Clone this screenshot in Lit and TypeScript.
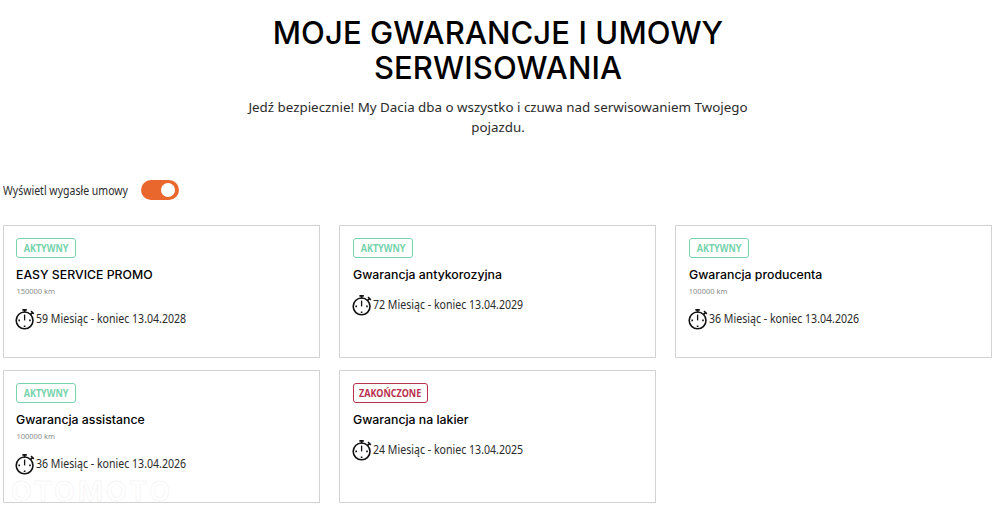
import { LitElement, html, css, nothing } from 'lit'
import { customElement, property, state } from 'lit/decorators.js'
import { classMap } from 'lit/directives/class-map.js'

interface Contract {
  name: string
  active: boolean
  mileage?: string
  months: number
  end: string
}

const CONTRACTS: Contract[] = [
  { name: 'EASY SERVICE PROMO', active: true, mileage: '150000 km', months: 59, end: '13.04.2028' },
  { name: 'Gwarancja antykorozyjna', active: true, months: 72, end: '13.04.2029' },
  { name: 'Gwarancja producenta', active: true, mileage: '100000 km', months: 36, end: '13.04.2026' },
  { name: 'Gwarancja assistance', active: true, mileage: '100000 km', months: 36, end: '13.04.2026' },
  { name: 'Gwarancja na lakier', active: false, months: 24, end: '13.04.2025' }
]

@customElement('contract-card')
export class ContractCard extends LitElement {
  @property({ attribute: false })
  contract!: Contract

  static styles = css`
    :host {
      display: block;
      box-sizing: border-box;
      height: 133px;
      padding: 12px 12px 12px 12.4px;
      border: 1px solid #d2d2d2;
      font-family: 'Noto Sans', sans-serif;
      color: #2b2b2b;
    }

    .badge {
      display: flex;
      justify-content: center;
      box-sizing: border-box;
      width: 60px;
      height: 20px;
      border: 1px solid #77d3ad;
      border-radius: 3px;
      color: #77d3ad;
      font-size: 10.5px;
      font-weight: 700;
      line-height: 18px;
      white-space: nowrap;
    }

    .badge span {
      transform: scaleX(0.86);
    }

    .badge.expired {
      width: 75px;
      border-color: #b9314f;
      color: #b9314f;
    }

    .name {
      margin: 8px 0 0;
      font-family: Inter, sans-serif;
      font-size: 11.6px;
      font-weight: 500;
      line-height: 18px;
      color: #000;
      white-space: nowrap;
      transform: scaleX(1.06);
      transform-origin: left;
    }

    .mileage {
      height: 14px;
      font-size: 7.5px;
      line-height: 14px;
      color: #8c8c8c;
    }

    .term {
      display: flex;
      align-items: center;
      height: 22px;
      margin-top: 11px;
      margin-left: -1px;
      font-size: 12px;
      line-height: 20px;
      white-space: nowrap;
    }

    .term span {
      margin: -3px 0 0 1px;
      transform: scaleX(0.882);
      transform-origin: left;
    }

    .watch {
      flex: none;
      width: 20px;
      height: 22px;
    }
  `

  private renderWatch() {
    return html`
      <svg class="watch" viewBox="0 0 20 22" fill="none" stroke="#111" stroke-width="1.6">
        <circle cx="9.6" cy="11.4" r="8.4" />
        <path d="M7.4 0.9h4.4M9.6 0.9v2.5M15.6 5.4l2-2M16 2.2l2.8 2.6" />
        <path d="M9.6 5.6v5.8" stroke-width="1.3" />
        <path d="M3.4 11.4h1.6M14.2 11.4h1.6M9.6 16.4v1.6" />
      </svg>
    `
  }

  render() {
    const { name, active, mileage, months, end } = this.contract
    return html`
      <div class=${classMap({ badge: true, expired: !active })}>
        <span>${active ? 'AKTYWNY' : 'ZAKOŃCZONE'}</span>
      </div>
      <h2 class="name">${name}</h2>
      ${mileage ? html`<div class="mileage">${mileage}</div>` : nothing}
      <div class="term">${this.renderWatch()}<span>${months} Miesiąc - koniec ${end}</span></div>
    `
  }
}

@customElement('app-root')
export class AppRoot extends LitElement {
  @state()
  private showExpired = true

  static styles = css`
    :host {
      display: block;
      position: relative;
      box-sizing: border-box;
      height: 512px;
      padding: 15px 7px 0 3px;
      overflow: hidden;
      background: #fff;
      font-family: 'Noto Sans', sans-serif;
      color: #2b2b2b;
    }

    .header {
      width: 510px;
      margin: 0 auto;
      text-align: center;
    }

    .title {
      margin: 0;
      font-family: Inter, sans-serif;
      font-size: 31px;
      font-weight: 500;
      line-height: 35px;
      letter-spacing: 0.1px;
      color: #000;
      white-space: nowrap;
    }

    .lead {
      margin: 12px 0 0;
      font-size: 13.36px;
      line-height: 20px;
      white-space: nowrap;
    }

    .filter {
      display: flex;
      align-items: center;
      gap: 13px;
      height: 20px;
      margin-top: 43px;
    }

    .filter-label {
      width: 125px;
      font-size: 12px;
      white-space: nowrap;
      transform: scaleX(0.877);
      transform-origin: left;
    }

    .toggle {
      box-sizing: border-box;
      display: flex;
      justify-content: flex-start;
      width: 38px;
      height: 20px;
      padding: 3px 4px;
      border: none;
      border-radius: 10px;
      background: #999;
      cursor: pointer;
    }

    .toggle.on {
      justify-content: flex-end;
      background: #e9662c;
    }

    .knob {
      width: 14px;
      height: 14px;
      border-radius: 50%;
      background: #fff;
    }

    .grid {
      display: grid;
      grid-template-columns: repeat(3, 316.8px);
      gap: 12px 19.4px;
      margin-top: 25px;
    }

    .watermark {
      position: absolute;
      left: 11px;
      top: 478px;
      font-family: Inter, sans-serif;
      font-size: 27px;
      font-weight: 700;
      line-height: 27px;
      letter-spacing: 3px;
      color: #fff;
      -webkit-text-stroke: 0.4px #eee;
    }
  `

  private toggleExpired() {
    this.showExpired = !this.showExpired
  }

  render() {
    const visible = CONTRACTS.filter(c => this.showExpired || c.active)

    return html`
      <header class="header">
        <h1 class="title">MOJE GWARANCJE I UMOWY<br />SERWISOWANIA</h1>
        <p class="lead">Jedź bezpiecznie! My Dacia dba o wszystko i czuwa nad serwisowaniem Twojego<br />pojazdu.</p>
      </header>

      <div class="filter">
        <div class="filter-label">Wyświetl wygasłe umowy</div>
        <button class=${classMap({ toggle: true, on: this.showExpired })} @click=${this.toggleExpired}>
          <span class="knob"></span>
        </button>
      </div>

      <main class="grid">
        ${visible.map(c => html`<contract-card .contract=${c}></contract-card>`)}
      </main>

      <div class="watermark">OTOMOTO</div>
    `
  }
}

declare global {
  interface HTMLElementTagNameMap {
    'app-root': AppRoot
    'contract-card': ContractCard
  }
}
